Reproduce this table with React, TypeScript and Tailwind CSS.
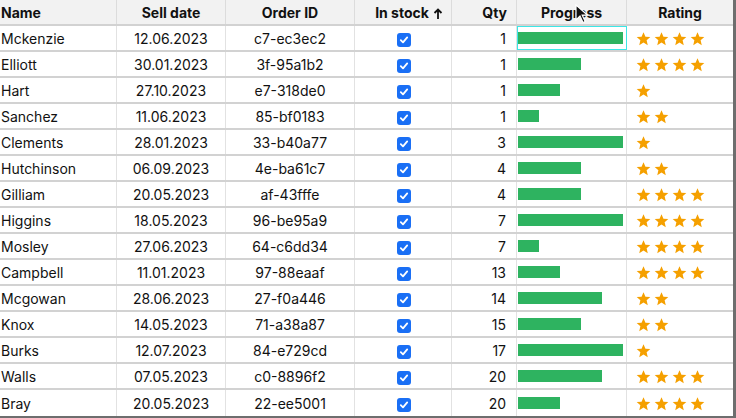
import React from "react";

type Row = {
  name: string;
  date: string;
  id: string;
  qty: number;
  progress: number;
  rating: number;
};

const rows: Row[] = [
  { name: "Mckenzie", date: "12.06.2023", id: "c7-ec3ec2", qty: 1, progress: 5, rating: 4 },
  { name: "Elliott", date: "30.01.2023", id: "3f-95a1b2", qty: 1, progress: 3, rating: 4 },
  { name: "Hart", date: "27.10.2023", id: "e7-318de0", qty: 1, progress: 2, rating: 1 },
  { name: "Sanchez", date: "11.06.2023", id: "85-bf0183", qty: 1, progress: 1, rating: 2 },
  { name: "Clements", date: "28.01.2023", id: "33-b40a77", qty: 3, progress: 5, rating: 1 },
  { name: "Hutchinson", date: "06.09.2023", id: "4e-ba61c7", qty: 4, progress: 3, rating: 2 },
  { name: "Gilliam", date: "20.05.2023", id: "af-43fffe", qty: 4, progress: 3, rating: 4 },
  { name: "Higgins", date: "18.05.2023", id: "96-be95a9", qty: 7, progress: 5, rating: 4 },
  { name: "Mosley", date: "27.06.2023", id: "64-c6dd34", qty: 7, progress: 1, rating: 4 },
  { name: "Campbell", date: "11.01.2023", id: "97-88eaaf", qty: 13, progress: 2, rating: 4 },
  { name: "Mcgowan", date: "28.06.2023", id: "27-f0a446", qty: 14, progress: 4, rating: 2 },
  { name: "Knox", date: "14.05.2023", id: "71-a38a87", qty: 15, progress: 3, rating: 2 },
  { name: "Burks", date: "12.07.2023", id: "84-e729cd", qty: 17, progress: 5, rating: 1 },
  { name: "Walls", date: "07.05.2023", id: "c0-8896f2", qty: 20, progress: 4, rating: 4 },
  { name: "Bray", date: "20.05.2023", id: "22-ee5001", qty: 20, progress: 2, rating: 4 },
];

const cols = "grid grid-cols-[117px_109px_129px_97px_65px_110px_106px]";

function Star() {
  return (
    <svg width="15" height="15" viewBox="0 0 24 24" className="shrink-0">
      <path
        d="M12 1.8l3.1 7.2 7.8.7-5.9 5.2 1.8 7.7L12 18.5l-6.8 4.1 1.8-7.7L1.1 9.7l7.8-.7z"
        fill="#f5a000"
      />
    </svg>
  );
}

function Check() {
  return (
    <div className="w-[14px] h-[14px] rounded-[3px] bg-[#1a6ff5] flex items-center justify-center">
      <svg width="10" height="10" viewBox="0 0 10 10">
        <path d="M1.8 5.2l2.2 2.2 4.2-5" stroke="white" strokeWidth="1.8" fill="none" strokeLinecap="round" strokeLinejoin="round" />
      </svg>
    </div>
  );
}

export default function App() {
  return (
    <div className="relative w-[736px] h-[418px] overflow-hidden bg-white font-['Inter','Liberation_Sans',sans-serif] text-[14px] text-[#111]">
      <div className="w-[736px] border-r-[3px] border-b-2 border-[#6e6e6e]">
        <div className={`${cols} h-[26px] bg-[#f2f2f2] border-b-2 border-[#d2d2d2] font-bold`}>
          <div className="flex items-center pl-[1px] border-r border-[#dcdcdc]">Name</div>
          <div className="flex items-center justify-center border-r border-[#dcdcdc]">Sell date</div>
          <div className="flex items-center justify-center border-r border-[#dcdcdc]">Order ID</div>
          <div className="flex items-center justify-center gap-1 pl-3 border-r border-[#dcdcdc]">
            In stock
            <svg width="10" height="12" viewBox="0 0 10 12" className="mt-1">
              <path d="M5 11V2M1.5 5L5 1.5 8.5 5" stroke="#111" strokeWidth="1.8" fill="none" />
            </svg>
          </div>
          <div className="flex items-center justify-end pr-[9px] border-r border-[#dcdcdc]">Qty</div>
          <div className="flex items-center justify-center border-r border-[#dcdcdc]">Progress</div>
          <div className="flex items-center justify-center">Rating</div>
        </div>

        {rows.map((r, i) => (
          <div key={r.name} className={`${cols} h-[26px] border-b-2 border-[#d2d2d2] last:border-b-0`}>
            <div className="flex items-center pl-[1px] border-r border-[#e2e2e2]">{r.name}</div>
            <div className="flex items-center justify-center border-r border-[#e2e2e2]">{r.date}</div>
            <div className="flex items-center justify-center border-r border-[#e2e2e2]">{r.id}</div>
            <div className="flex items-center justify-center pl-[2px] pt-[3px] border-r border-[#e2e2e2]">
              <Check />
            </div>
            <div className="flex items-center justify-end pr-[10px] border-r border-[#e2e2e2]">{r.qty}</div>
            <div
              className={`flex items-center px-[1px] border-r border-[#e2e2e2] ${
                i === 0 ? "outline outline-1 outline-[#3ee6e6] -outline-offset-1" : ""
              }`}
            >
              <div className="h-[12px] bg-[#2eb360]" style={{ width: `${r.progress * 21}px` }} />
            </div>
            <div className="flex items-center gap-[3px] pl-[9px]">
              {Array.from({ length: r.rating }).map((_, k) => (
                <Star key={k} />
              ))}
            </div>
          </div>
        ))}
      </div>

      <svg width="14" height="20" viewBox="0 0 14 20" className="absolute left-[575px] top-[4px]">
        <path d="M1 1v15l4-4 3 6.5 2.2-1-3-6.3h5.5z" fill="#111" stroke="white" strokeWidth="1.2" />
      </svg>
    </div>
  );
}
